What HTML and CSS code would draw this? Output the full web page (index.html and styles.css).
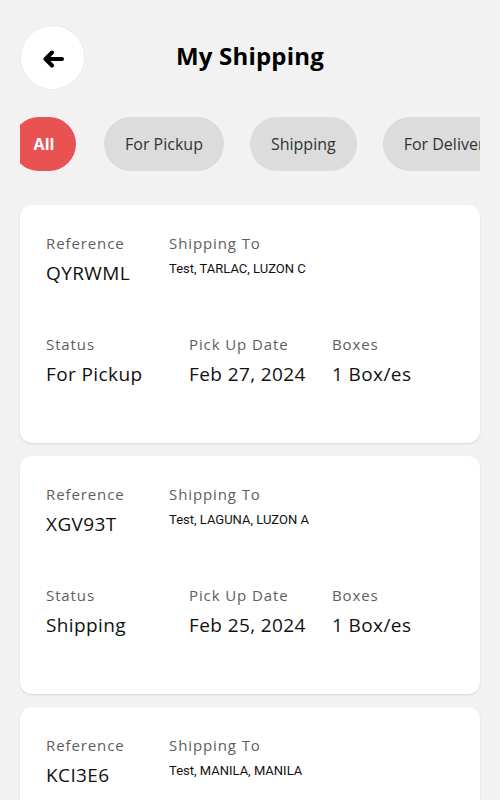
FILE: index.html
```html
<!DOCTYPE html>
<html lang="en">
<head>
<meta charset="utf-8">
<title>My Shipping</title>
<link rel="stylesheet" href="styles.css">
</head>
<body>
<div class="page">
  <header class="header">
    <button class="back" aria-label="Back">
      <svg width="22" height="18" viewBox="0 0 22 18"><path d="M20 9H4M10 2.5L3.5 9L10 15.5" fill="none" stroke="#000" stroke-width="4" stroke-linecap="round" stroke-linejoin="round"/></svg>
    </button>
    <h1 class="title">My Shipping</h1>
    <span></span>
  </header>

  <nav class="chips">
    <div class="chips-track">
      <span class="chip chip-active">All</span>
      <span class="chip">For Pickup</span>
      <span class="chip">Shipping</span>
      <span class="chip">For Delivery</span>
    </div>
  </nav>

  <section class="list">
    <article class="card">
      <div class="row row-top">
        <div class="field field-ref"><span class="label">Reference</span><span class="value">QYRWML</span></div>
        <div class="field"><span class="label">Shipping To</span><span class="addr">Test, TARLAC, LUZON C</span></div>
      </div>
      <div class="row row-bottom">
        <div class="field field-col"><span class="label">Status</span><span class="value">For Pickup</span></div>
        <div class="field field-col"><span class="label">Pick Up Date</span><span class="value">Feb 27, 2024</span></div>
        <div class="field"><span class="label">Boxes</span><span class="value">1 Box/es</span></div>
      </div>
    </article>

    <article class="card">
      <div class="row row-top">
        <div class="field field-ref"><span class="label">Reference</span><span class="value">XGV93T</span></div>
        <div class="field"><span class="label">Shipping To</span><span class="addr">Test, LAGUNA, LUZON A</span></div>
      </div>
      <div class="row row-bottom">
        <div class="field field-col"><span class="label">Status</span><span class="value">Shipping</span></div>
        <div class="field field-col"><span class="label">Pick Up Date</span><span class="value">Feb 25, 2024</span></div>
        <div class="field"><span class="label">Boxes</span><span class="value">1 Box/es</span></div>
      </div>
    </article>

    <article class="card">
      <div class="row row-top">
        <div class="field field-ref"><span class="label">Reference</span><span class="value">KCI3E6</span></div>
        <div class="field"><span class="label">Shipping To</span><span class="addr">Test, MANILA, MANILA</span></div>
      </div>
    </article>
  </section>
</div>
</body>
</html>
```
FILE: styles.css
```css
* { box-sizing: border-box; }

html, body {
  margin: 0;
  padding: 0;
  background: #f2f2f2;
  height: 800px;
  overflow: hidden;
}

body {
  font-family: "Open Sans", "Liberation Sans", sans-serif;
  color: #111;
}

.page {
  padding: 25px 20px 0;
}

.header {
  display: grid;
  grid-template-columns: 65px 1fr 65px;
  align-items: center;
}

.back {
  width: 65px;
  height: 65px;
  border-radius: 50%;
  border: 1px solid #ececec;
  background: #fff;
  display: flex;
  align-items: center;
  justify-content: center;
  padding: 0;
  cursor: pointer;
}

.back svg { margin-top: 2px; }

.title {
  margin: -4px 0 0;
  text-align: center;
  font-size: 24px;
  font-weight: 700;
  color: #000;
  letter-spacing: 0.2px;
}

.chips {
  margin-top: 27px;
  overflow: hidden;
}

.chips-track {
  display: flex;
  gap: 26px;
  margin-left: -8px;
}

.chip {
  flex: none;
  height: 54px;
  padding: 0 21px;
  border-radius: 27px;
  background: #dcdcdc;
  color: #333;
  font-size: 16px;
  display: flex;
  align-items: center;
  white-space: nowrap;
}

.chip-active {
  background: #e85253;
  color: #fff;
  font-weight: 700;
  width: 64px;
  justify-content: center;
  padding: 0;
  margin-right: 2px;
}

.list {
  margin-top: 34px;
  display: flex;
  flex-direction: column;
  gap: 13px;
}

.card {
  background: #fff;
  border-radius: 12px;
  height: 238px;
  flex: none;
  padding: 27px 26px 0;
  box-shadow: 0 1px 2px rgba(0, 0, 0, 0.12);
}

.row {
  display: flex;
}

.row-bottom {
  margin-top: 45px;
}

.field {
  display: flex;
  flex-direction: column;
}

.field-ref { width: 123px; }
.field-col { width: 143px; }

.label {
  font-size: 15px;
  line-height: 22px;
  color: #5e5e5e;
  letter-spacing: 0.9px;
}

.value {
  font-size: 19px;
  line-height: 30px;
  margin-top: 4px;
  color: #111;
  font-weight: 500;
  letter-spacing: 0.4px;
}

.addr {
  font-family: Roboto, "Liberation Sans", sans-serif;
  font-size: 13px;
  line-height: 18px;
  margin-top: 6px;
  color: #111;
}
```
